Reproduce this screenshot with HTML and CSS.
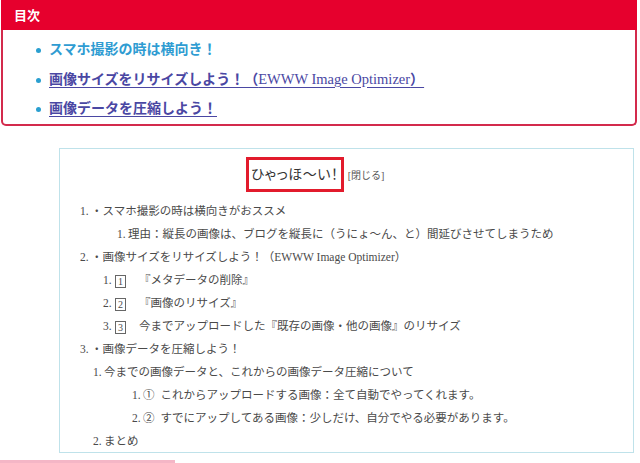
FILE: index.html
```html
<!DOCTYPE html>
<html lang="ja">
<head>
<meta charset="utf-8">
<link rel="stylesheet" href="styles.css">
</head>
<body>
<div class="toc">
  <div class="toc-head">目次</div>
  <ul class="toc-list">
    <li><a class="visited" href="#a">スマホ撮影の時は横向き！</a></li>
    <li><a href="#b">画像サイズをリサイズしよう！（<span class="lat">EWWW Image Optimizer</span>）</a></li>
    <li><a href="#c">画像データを圧縮しよう！</a></li>
  </ul>
</div>

<div class="box">
  <div class="title-row">
    <span class="title">ひゃっほ〜い！</span><span class="close">[閉じる]</span>
  </div>
  <div class="rows">
    <div class="row l1"><span class="num">1.</span>・スマホ撮影の時は横向きがおススメ</div>
    <div class="row l3a"><span class="num">1.</span>理由：縦長の画像は、ブログを縦長に（うにょ〜ん、と）間延びさせてしまうため</div>
    <div class="row l1"><span class="num">2.</span>・画像サイズをリサイズしよう！（EWWW Image Optimizer）</div>
    <div class="row l2b"><span class="num">1.</span><span class="sq">1</span><span class="sp"></span>『メタデータの削除』</div>
    <div class="row l2b"><span class="num">2.</span><span class="sq">2</span><span class="sp"></span>『画像のリサイズ』</div>
    <div class="row l2b"><span class="num">3.</span><span class="sq">3</span><span class="sp"></span>今までアップロードした『既存の画像・他の画像』のリサイズ</div>
    <div class="row l1"><span class="num">3.</span>・画像データを圧縮しよう！</div>
    <div class="row l2"><span class="num">1.</span>今までの画像データと、これからの画像データ圧縮について</div>
    <div class="row l3"><span class="num">1.</span>①<span class="sp sp-s"></span>これからアップロードする画像：全て自動でやってくれます。</div>
    <div class="row l3"><span class="num">2.</span>②<span class="sp sp-s"></span>すでにアップしてある画像：少しだけ、自分でやる必要があります。</div>
    <div class="row l2"><span class="num">2.</span>まとめ</div>
  </div>
</div>
<div class="pink"></div>
</body>
</html>
```
FILE: styles.css
```css
html, body {
  margin: 0;
  padding: 0;
  background: #ffffff;
}
body {
  width: 640px;
  height: 463px;
  overflow: hidden;
  font-family: "Liberation Serif", "Noto Sans CJK JP", serif;
}
.toc {
  margin-left: 1px;
  width: 632px;
  height: 124px;
  border: 2px solid #d32a4c;
  border-top: none;
  border-radius: 0 0 5px 5px;
}
.toc-head {
  background: #e6002d;
  color: #ffffff;
  height: 30px;
  margin: 0 -2px;
  padding-left: 13px;
  font-size: 13px;
  font-weight: bold;
  line-height: 31px;
}
.toc-list {
  margin: 0;
  padding: 5px 0 0 46px;
  list-style: none;
}
.toc-list li {
  position: relative;
  height: 29.5px;
  line-height: 29.5px;
  font-size: 14px;
  font-weight: bold;
}
.toc-list li::before {
  content: "";
  position: absolute;
  left: -13px;
  top: 13px;
  width: 5px;
  height: 5px;
  border-radius: 50%;
  background: #2a9fd0;
}
.toc-list a {
  color: #4a47a3;
  text-decoration: underline;
  text-underline-offset: 3px;
}
.toc-list a.visited {
  color: #2f9cd2;
  text-decoration: none;
}
.lat {
  font-weight: normal;
  font-size: 14.5px;
}
.box {
  margin: 22px 0 0 59px;
  width: 573px;
  height: 303px;
  border: 1px solid #bfe2ea;
  color: #4a4a4a;
}
.title-row {
  display: flex;
  justify-content: center;
  align-items: center;
  padding-top: 8px;
  padding-right: 63px;
  white-space: nowrap;
}
.title {
  display: inline-block;
  border: 3px solid #e21b2c;
  width: 92px;
  height: 29px;
  line-height: 29px;
  text-align: center;
  font-size: 14px;
  font-feature-settings: "palt";
  letter-spacing: 0.5px;
  color: #333;
}
.close {
  font-size: 10px;
  margin-left: 4px;
  color: #555;
}
.rows {
  padding-top: 8px;
}
.row {
  height: 23px;
  line-height: 23px;
  font-size: 11.5px;
  white-space: nowrap;
}
.num {
  display: inline-block;
  width: 11px;
}
.l1 { padding-left: 20px; }
.l2 { padding-left: 33px; }
.l2b { padding-left: 43px; }
.l3a { padding-left: 57px; }
.l3 { padding-left: 72px; }
.sq {
  display: inline-block;
  width: 9px;
  height: 11px;
  line-height: 11px;
  border: 1px solid #666;
  font-size: 10px;
  text-align: center;
  vertical-align: -1px;
  margin-left: 1px;
}
.sp {
  display: inline-block;
  width: 13px;
}
.sp-s {
  width: 6px;
}
.pink {
  position: absolute;
  left: 0;
  top: 460px;
  width: 175px;
  height: 3px;
  background: #f4b6c6;
}
```
